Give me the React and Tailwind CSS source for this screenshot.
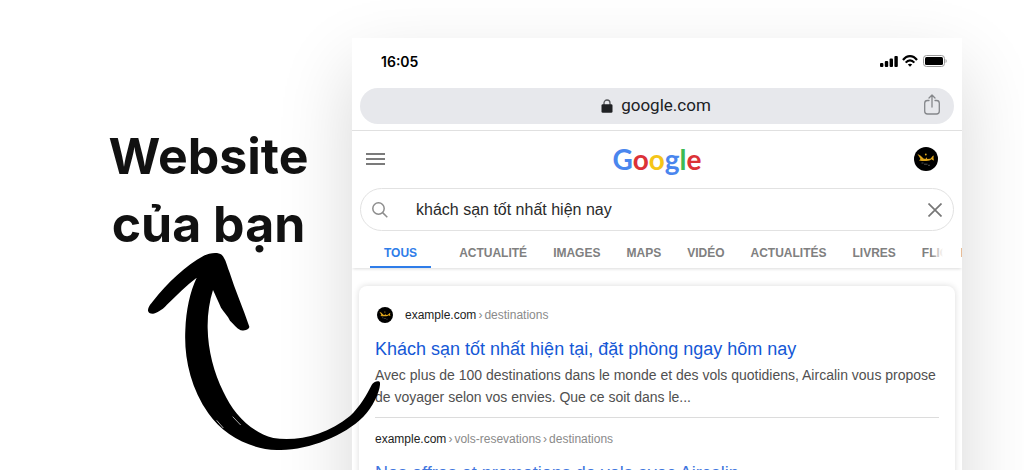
import React from "react";

const TABS = ["ACTUALITÉ", "IMAGES", "MAPS", "VIDÉO", "ACTUALITÉS", "LIVRES"];

function SiteBadge({ className }) {
  return (
    <svg viewBox="0 0 24 24" className={className} aria-hidden="true">
      <circle cx="12" cy="12" r="12" fill="#000" />
      <path d="M3.500 7l3.200 1.800L9.500 11.600l2 .4.800-1.800 1 1.800 3-.2 1.200-1.300c.8-1.300 1.600-1.800 2.400-2-.6 1.600-.5 3.400.2 5-1.200-.2-2-.7-2.700-1.200-1 1-2.600 1.600-5 1.700-2.800.1-5-.1-7.400-.6l1.500-1.400C5.700 10.200 4.500 8.500 3.500 7z" fill="#e0a61c" />
      <circle cx="11.800" cy="7.500" r=".9" fill="#e0a61c" />
      <path d="M7.500 16h2M10 17.200h3.500M14 18.300h2" stroke="#666" strokeWidth=".8" />
    </svg>
  );
}

function StatusBar() {
  return (
    <div className="flex h-[50px] items-center justify-between pr-[15px] pb-0.5 pl-[29px]">
      <span className="font-['Inter',sans-serif] text-sm font-semibold text-black">16:05</span>
      <div className="flex items-center gap-1 pb-0.5">
        <svg viewBox="0 0 18 12" className="h-3 w-[18px]" aria-hidden="true">
          <rect x="0" y="8" width="3.400" height="4" rx="1" />
          <rect x="4.800" y="6" width="3.400" height="6" rx="1" />
          <rect x="9.600" y="3.500" width="3.400" height="8.500" rx="1" />
          <rect x="14.400" y="1" width="3.400" height="11" rx="1" />
        </svg>
        <svg viewBox="0 0 16 12" className="h-3 w-4" fill="none" stroke="#000" strokeWidth="2.200" aria-hidden="true">
          <path d="M1 5C5-.2 11-.2 15 5" />
          <path d="M3.700 7.600c2.500-3 6.100-3 8.600 0" />
          <path d="M8 11.800L5.800 9.600c1.200-1.200 3.200-1.200 4.400 0z" fill="#000" stroke="none" />
        </svg>
        <svg viewBox="0 0 25 12" className="h-3 w-[25px]" aria-hidden="true">
          <rect x="1.500" y=".5" width="21" height="11" rx="3" fill="none" stroke="#999" />
          <rect x="3" y="2" width="18" height="8" rx="1.500" />
          <path d="M23.600 4c1.400.6 1.400 3.400 0 4z" fill="#999" />
        </svg>
      </div>
    </div>
  );
}

function AddressBar() {
  return (
    <div className="border-b border-[#e0e0e0] px-2 pb-1.5">
      <div className="relative flex h-9 items-center justify-center gap-2 rounded-full bg-[#e7e8ec] pr-0.5">
        <svg viewBox="0 0 12 14" className="h-3.5 w-3" aria-hidden="true">
          <path d="M3 6V4a3 3 0 0 1 6 0v2" fill="none" stroke="#55565a" strokeWidth="1.300" />
          <rect x=".5" y="5.200" width="11" height="8.500" rx="1.300" fill="#202124" />
        </svg>
        <span className="font-['Roboto',sans-serif] text-[17px] text-[#202124]">google.com</span>
        <button type="button" aria-label="Share" className="absolute right-3.5 top-1.5">
          <svg viewBox="0 0 16 21" className="h-[21px] w-4" fill="none" stroke="#85878b" strokeWidth="1.300" strokeLinecap="round" strokeLinejoin="round" aria-hidden="true">
            <path d="M5 6.500H3.500A2.800 2.800 0 0 0 .7 9.300v7.900A2.800 2.800 0 0 0 3.500 20h9a2.800 2.800 0 0 0 2.800-2.800V9.300a2.800 2.800 0 0 0-2.800-2.800H11M8 13V1M5 4l3-3 3 3" />
          </svg>
        </button>
      </div>
    </div>
  );
}

function SearchHeader() {
  return (
    <>
      <header className="grid h-[57px] grid-cols-3 items-center pr-[14px] pb-0.5 pl-[14px]">
        <button type="button" aria-label="Menu" className="w-6">
          <svg viewBox="0 0 19 12" className="h-3 w-[19px]" stroke="#7b7b7b" strokeWidth="1.800" aria-hidden="true">
            <path d="M0 1h19M0 6h19M0 11h19" />
          </svg>
        </button>
        <a href="#home" className="justify-self-center font-['Lato',sans-serif] text-[28px] leading-none font-bold">
          <span className="text-[#4a86ee]">G</span>
          <span className="text-[#dc3237]">o</span>
          <span className="text-[#f5c518]">o</span>
          <span className="text-[#4a86ee]">g</span>
          <span className="text-[#3cba54]">l</span>
          <span className="text-[#dc3237]">e</span>
        </a>
        <button type="button" aria-label="Account" className="mr-2.5 justify-self-end">
          <SiteBadge className="size-6" />
        </button>
      </header>
      <form className="px-2" onSubmit={(e) => e.preventDefault()}>
        <div className="flex h-[43px] items-center rounded-full border border-[#e2e2e2] px-[11px]">
          <svg viewBox="0 0 16 16" className="size-4 shrink-0" fill="none" stroke="#8d8d8d" strokeWidth="1.500" aria-hidden="true">
            <circle cx="6.500" cy="6.500" r="5.700" />
            <path d="M10.600 10.600L15.300 15.300" />
          </svg>
          <input
            type="text"
            aria-label="Search"
            defaultValue="khách sạn tốt nhất hiện nay"
            className="ml-7 min-w-0 flex-1 bg-transparent text-base text-[#2a2a2a] outline-none"
          />
          <button type="button" aria-label="Clear">
            <svg viewBox="0 0 14 14" className="size-3.5" stroke="#777" strokeWidth="1.700" aria-hidden="true">
              <path d="M.5.5l13 13M13.500.5l-13 13" />
            </svg>
          </button>
        </div>
      </form>
    </>
  );
}

function Tabs() {
  return (
    <nav className="flex h-[37px] items-stretch gap-[26px] overflow-hidden pl-[18px] text-xs font-bold whitespace-nowrap text-[#808080] shadow-[0_2px_3px_-1px_rgba(0,0,0,0.14)]">
      <a href="#tous" className="mr-0.5 flex shrink-0 items-center border-b-2 border-[#2f7de9] px-3.5 pt-3 pb-1 text-[#2f7de9]">
        TOUS
      </a>
      {TABS.map((t) => (
        <a key={t} href={"#" + t} className="flex shrink-0 items-center pt-3 pb-1.5">
          {t}
        </a>
      ))}
      <a href="#flights" className="relative flex w-[21px] shrink-0 items-center overflow-hidden pt-3 pb-1.5">
        FLIG
        <span className="absolute inset-y-0 right-0 w-3 bg-linear-to-r from-transparent to-white" />
      </a>
      <span className="-ml-2 flex shrink-0 items-center pt-3 pb-1.5">I</span>
    </nav>
  );
}

function Crumbs({ site, parts }) {
  return (
    <p className="text-xs leading-4 text-[#8a8a8a]">
      <span className="text-[#222]">{site}</span>
      {parts.map((p) => (
        <React.Fragment key={p}>
          <span className="mx-0.5">›</span>
          {p}
        </React.Fragment>
      ))}
    </p>
  );
}

function Results() {
  return (
    <main className="mx-[7px] mt-[18px] rounded-lg bg-white px-4 pt-[21px] shadow-[0_0_6px_rgba(0,0,0,0.15)]">
      <article className="border-b border-[#dcdcdc] pb-[9px]">
        <div className="flex items-center gap-3">
          <SiteBadge className="ml-0.5 size-4" />
          <Crumbs site="example.com" parts={["destinations"]} />
        </div>
        <h2 className="mt-3.5 text-lg leading-6 text-[#1558d6]">
          <a href="#result-1">Khách sạn tốt nhất hiện tại, đặt phòng ngay hôm nay</a>
        </h2>
        <p className="mt-[3px] text-sm leading-[22px] text-[#505050]">
          Avec plus de 100 destinations dans le monde et des vols quotidiens, Aircalin vous propose de voyager selon vos
          envies. Que ce soit dans le...
        </p>
      </article>
      <article className="pt-[13px]">
        <Crumbs site="example.com" parts={["vols-resevations", "destinations"]} />
        <h2 className="mt-3.5 text-lg leading-6 text-[#3f76de]">
          <a href="#result-2">Nos offres et promotions de vols avec Aircalin</a>
        </h2>
      </article>
    </main>
  );
}

function Arrow() {
  return (
    <svg viewBox="24 36 696 594" className="absolute top-[252px] left-[148px] z-10 h-[198px] w-[232px]" aria-hidden="true">
      <path d="M24 212C24 200 32 192 40 182C80 130 140 75 190 48C210 37 235 36 245 44C258 58 262 80 268 95C285 150 310 205 328 260C328 268 315 272 302 271C290 264 280 252 270 242C264 228 250 215 243 203C235 185 226 165 219 150C208 185 202 225 203 265C204 330 222 400 250 455C280 520 330 575 400 594C470 606 560 585 630 528C660 500 680 465 695 435C700 425 718 420 720 428C722 450 700 500 670 530C610 590 500 632 410 630C330 628 250 585 205 520C150 440 132 350 136 270C138 210 150 155 170 113C140 135 110 165 80 195C65 212 45 222 38 221C30 220 25 218 24 212Z" />
      <path d="M278 530l24 25M230 541l20 23" stroke="#fff" strokeWidth="2" fill="none" />
    </svg>
  );
}

export default function App() {
  return (
    <div className="relative flex h-screen overflow-hidden bg-white font-['Liberation_Sans',Arial,sans-serif]">
      <h1 className="z-10 w-[352px] shrink-0 pt-[122px] pl-[65px] text-center font-['Inter',sans-serif] text-[50px] leading-[68px] font-bold text-[#111]">
        Website
        <br />
        của bạn
      </h1>
      <section className="mt-[38px] mr-[62px] min-h-[600px] min-w-0 flex-1 overflow-hidden bg-white shadow-[0_30px_70px_rgba(0,0,0,0.16)]">
        <StatusBar />
        <AddressBar />
        <SearchHeader />
        <Tabs />
        <Results />
      </section>
      <Arrow />
    </div>
  );
}
